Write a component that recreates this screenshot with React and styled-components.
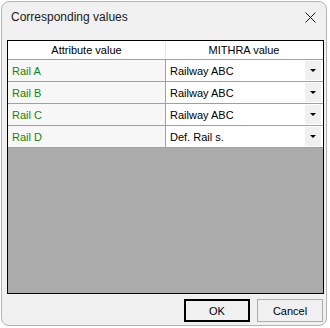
import React from "react";
import styled, { createGlobalStyle } from "styled-components";

const GlobalStyle = createGlobalStyle`
    html, body {
        margin: 0;
        padding: 0;
        background: #ffffff;
    }
    #root {
        padding: 1px 2px 1px 1px;
    }
`;

const Window = styled.div`
    width: 326px;
    height: 325px;
    box-sizing: border-box;
    background: #f0f0f0;
    border: 1px solid #b4b4b4;
    border-radius: 8px;
    display: flex;
    flex-direction: column;
    overflow: hidden;
`;

const TitleBar = styled.div`
    height: 30px;
    display: flex;
    align-items: center;
    justify-content: space-between;
    padding: 0 8px 0 9px;
    font-family: "Liberation Sans", Arial, sans-serif;
    font-size: 12px;
    color: #1a1a1a;
`;

const CloseButton = styled.div`
    width: 16px;
    height: 16px;
    display: flex;
    align-items: center;
    justify-content: center;
`;

const Body = styled.div`
    flex: 1;
    display: flex;
    flex-direction: column;
    padding: 8px 2px 3px 5px;
`;

const Grid = styled.div`
    height: 254px;
    box-sizing: border-box;
    border: 1px solid #000;
    background: #ababab;
    display: flex;
    flex-direction: column;
    font-family: "Liberation Sans", Arial, sans-serif;
    font-size: 11px;
`;

const Row = styled.div`
    display: grid;
    grid-template-columns: 158px 1fr;
    height: ${p => (p.$header ? 19 : 22)}px;
    box-sizing: border-box;
    border-bottom: 1px solid #a0a0a0;
`;

const HeaderCell = styled.div`
    background: #fff;
    display: flex;
    align-items: center;
    justify-content: center;
    color: #000;
    border-right: 1px solid ${p => (p.$last ? "transparent" : "#e5e5e5")};
`;

const NameCell = styled.div`
    background: #f7f7f7;
    color: #0a8a0a;
    display: flex;
    align-items: center;
    padding-left: 4px;
    border-right: 1px solid #a0a0a0;
`;

const ComboCell = styled.div`
    background: #fff;
    color: #000;
    display: flex;
    align-items: center;
    justify-content: space-between;
    padding: 1px 2px 1px 4px;
`;

const DropButton = styled.div`
    width: 16px;
    align-self: stretch;
    background: #f0f0f0;
    display: flex;
    align-items: center;
    justify-content: center;
`;

const Arrow = styled.div`
    width: 0;
    height: 0;
    border-left: 3px solid transparent;
    border-right: 3px solid transparent;
    border-top: 3px solid #000;
`;

const Footer = styled.div`
    display: flex;
    justify-content: flex-end;
    gap: 7px;
    margin-top: 5px;
    padding-right: 1px;
`;

const Button = styled.div`
    width: 66px;
    height: 23px;
    box-sizing: border-box;
    border: ${p => (p.$default ? "2px solid #000" : "1px solid #adadad")};
    background: #f0f0f0;
    display: flex;
    align-items: center;
    justify-content: center;
    font-family: "Liberation Sans", Arial, sans-serif;
    font-size: 11px;
    color: #000;
`;

const rows = [
    { name: "Rail A", value: "Railway ABC" },
    { name: "Rail B", value: "Railway ABC" },
    { name: "Rail C", value: "Railway ABC" },
    { name: "Rail D", value: "Def. Rail s." }
];

export default function App() {
    return (
        <>
            <GlobalStyle />
            <Window>
                <TitleBar>
                    <span>Corresponding values</span>
                    <CloseButton>
                        <svg width="11" height="11" viewBox="0 0 11 11">
                            <path d="M0.5 0.5 L10.5 10.5 M10.5 0.5 L0.5 10.5" stroke="#1a1a1a" strokeWidth="1" />
                        </svg>
                    </CloseButton>
                </TitleBar>
                <Body>
                    <Grid>
                        <Row $header>
                            <HeaderCell>Attribute value</HeaderCell>
                            <HeaderCell $last>MITHRA value</HeaderCell>
                        </Row>
                        {rows.map(r => (
                            <Row key={r.name}>
                                <NameCell>{r.name}</NameCell>
                                <ComboCell>
                                    <span>{r.value}</span>
                                    <DropButton>
                                        <Arrow />
                                    </DropButton>
                                </ComboCell>
                            </Row>
                        ))}
                    </Grid>
                    <Footer>
                        <Button $default>OK</Button>
                        <Button>Cancel</Button>
                    </Footer>
                </Body>
            </Window>
        </>
    );
}
